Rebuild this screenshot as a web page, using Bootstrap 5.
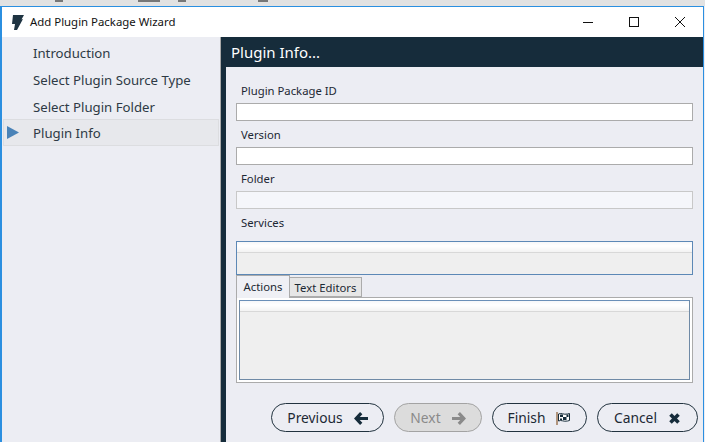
<!DOCTYPE html>
<html lang="en">
<head>
    <meta charset="UTF-8">
    <title>Add Plugin Package Wizard</title>
    <link href="https://cdn.jsdelivr.net/npm/bootstrap@5.3.0/dist/css/bootstrap.min.css" rel="stylesheet">
    <style>
        html, body { height: 442px; overflow: hidden; background: #ecedf3; }
        body { font-family: "Noto Sans", "Open Sans", sans-serif; font-size: 12px; color: #1c2833; }
        .desk-strip { height: 6px; background: #e2e2e2; gap: 0; }
        .desk-strip span { display: block; height: 2px; background: #777; }
        .wiz-window { height: 436px; border-top: 1px solid #2b8fe0; border-left: 2px solid #2b8fe0; border-right: 1px solid #2b8fe0; margin-right: 1px; }
        .wiz-title { height: 30px; background: #fff; color: #111; font-size: 11.4px; padding-left: 9px; }
        .wiz-title .app-name { margin-left: 5px; }
        .win-btn { width: 46px; height: 30px; }
        .wiz-side { width: 219px; border-right: 1px solid #a8a8a8; background: #ecedf3; padding: 2px 1px; }
        .side-step { height: 26.67px; padding-top: 4px; font-size: 13.2px; color: #2e3a45; padding-left: 29px; position: relative; border: 1px solid transparent; }
        .side-step.is-current { background: #e7e8ec; border-color: #dcdde0; }
        .side-step svg { position: absolute; left: 3px; top: 6px; }
        .wiz-main { border-left: 5px solid #162c3b; }
        .wiz-head { height: 30px; margin-left: -5px; background: #162c3b; color: #fff; font-size: 15px; padding-left: 10px; }
        .wiz-body { padding: 0 10px 0 10px; }
        .fld-label { height: 20px; margin-top: 6px; margin-left: 5px; font-size: 11.3px; color: #1c2833; line-height: 16px; }
        .fld-label.first { margin-top: 16px; }
        .fld-input { height: 18px; min-height: 18px; padding: 0 4px; border: 1px solid #ababab; border-radius: 0; font-size: 12px; background: #fff; }
        .fld-input:disabled { background: #f5f6fa; border-color: #c8c8c8; }
        .svc-box { height: 34px; margin-top: 6px; border: 1px solid #5c88b6; background: #efefef; }
        .grid-head { height: 11px; background: linear-gradient(#f6f7f9, #fff 40%, #f3f3f3); border-bottom: 1px solid #d8d8d8; }
        .tab-row { height: 22px; gap: 0; }
        .tab-row .nav-link { padding: 0; border-radius: 0; color: #1c2833; font-size: 11.3px; text-align: center; }
        .tab-row .nav-link.active { width: 54px; height: 23px; line-height: 22px; background: #eff0f5; border: 1px solid #ababab; border-bottom: 0; margin: 0; position: relative; z-index: 1; }
        .tab-row .nav-link.off { width: 72px; height: 20px; margin-top: 2px; line-height: 19px; background: #e6e6e6; border: 1px solid #ababab; border-left: 0; }
        .tab-pane-box { height: 86px; border: 1px solid #ababab; background: #fff; padding: 2px; }
        .tab-grid { height: 100%; border: 1px solid #6f8aa6; border-top-color: #6a8fb8; background: #efefef; }
        .wiz-foot { height: 29px; margin-top: 20px; margin-right: -5px; gap: 10px; }
        .pill-btn { height: 29px; border: 1px solid #22333f; border-radius: 15px; background: #ecedf3; color: #1c2833; font-size: 13.8px; padding: 1px 0 0; gap: 11px; }
        .pill-btn:disabled { background: #dcdcdc; border-color: #a3a3a3; color: #8a8a8a; opacity: 1; }
        .btn-prev { width: 113px; }
        .btn-next { width: 88px; }
        .btn-finish { width: 95px; }
        .btn-cancel { width: 101px; }
    </style>
</head>
<body>
    <div class="desk-strip d-flex align-items-start">
        <span style="width: 8px; margin-left: 55px"></span>
        <span style="width: 22px; margin-left: 75px"></span>
        <span style="width: 8px; margin-left: 18px"></span>
        <span style="width: 10px; margin-left: 72px"></span>
    </div>
    <div class="wiz-window d-flex flex-column">
        <div class="wiz-title d-flex align-items-center">
            <svg width="14" height="17" viewBox="0 0 14 17"><path d="M2 1h11l-2.500 4.500L12 5l-6 11H3l1-6H1z" fill="#1f3442"/></svg>
            <span class="app-name flex-grow-1">Add Plugin Package Wizard</span>
            <div class="win-btn d-flex align-items-center justify-content-center">
                <svg width="10" height="10"><path d="M0 5.500h10" stroke="#111"/></svg>
            </div>
            <div class="win-btn d-flex align-items-center justify-content-center">
                <svg width="10" height="10"><rect x=".5" y=".5" width="9" height="9" fill="none" stroke="#111"/></svg>
            </div>
            <div class="win-btn d-flex align-items-center justify-content-center">
                <svg width="10" height="10"><path d="M0 0l10 10M10 0L0 10" stroke="#111"/></svg>
            </div>
        </div>
        <div class="d-flex flex-grow-1">
            <div class="wiz-side">
                <div class="side-step d-flex align-items-center">Introduction</div>
                <div class="side-step d-flex align-items-center">Select Plugin Source Type</div>
                <div class="side-step d-flex align-items-center">Select Plugin Folder</div>
                <div class="side-step is-current d-flex align-items-center">
                    <svg width="13" height="13"><path d="M0 0l12 6.500L0 13z" fill="#4a83b8"/></svg>
                    Plugin Info
                </div>
            </div>
            <div class="wiz-main flex-grow-1 d-flex flex-column">
                <div class="wiz-head d-flex align-items-center">Plugin Info...</div>
                <div class="wiz-body">
                    <div class="fld-label first">Plugin Package ID</div>
                    <input class="form-control fld-input" type="text">
                    <div class="fld-label">Version</div>
                    <input class="form-control fld-input" type="text">
                    <div class="fld-label">Folder</div>
                    <input class="form-control fld-input" type="text" disabled>
                    <div class="fld-label">Services</div>
                    <div class="svc-box"><div class="grid-head"></div></div>
                    <ul class="nav tab-row">
                        <li class="nav-item"><a class="nav-link active" href="#">Actions</a></li>
                        <li class="nav-item"><a class="nav-link off" href="#">Text Editors</a></li>
                    </ul>
                    <div class="tab-pane-box">
                        <div class="tab-grid"><div class="grid-head"></div></div>
                    </div>
                    <div class="wiz-foot d-flex justify-content-end">
                        <button class="btn pill-btn btn-prev d-flex align-items-center justify-content-center" type="button">Previous
                            <svg width="14" height="13" viewBox="0 0 14 13"><path d="M7.200 1.200L2.200 6.500l5 5.300M3 6.500H14" fill="none" stroke="#162c3b" stroke-width="3.200"/></svg>
                        </button>
                        <button class="btn pill-btn btn-next d-flex align-items-center justify-content-center" type="button" disabled>Next
                            <svg width="14" height="13" viewBox="0 0 14 13"><path d="M6.800 1.200l5 5.300-5 5.300M11 6.500H0" fill="none" stroke="#8a8a8a" stroke-width="3.200"/></svg>
                        </button>
                        <button class="btn pill-btn btn-finish d-flex align-items-center justify-content-center" type="button">Finish
                            <svg width="15" height="13" viewBox="0 0 15 13"><path d="M1 0v13" stroke="#8a5a30" stroke-width="1.200"/><path d="M2.500 2c3-1.500 5 1 9 0l2-.5v7l-2 .5c-4 1-6-1.500-9 0z" fill="#fff" stroke="#162c3b"/><path d="M4 2.500h3V5H4zM7 5h3.500v3H7zM10.500 2.500h2V5h-2zM4 6.500h2V8H4z" fill="#162c3b"/></svg>
                        </button>
                        <button class="btn pill-btn btn-cancel d-flex align-items-center justify-content-center" type="button">Cancel
                            <svg width="13" height="13" viewBox="0 0 13 13"><path d="M2.500 2.500l8 8M10.500 2.500l-8 8" stroke="#162c3b" stroke-width="3.600"/></svg>
                        </button>
                    </div>
                </div>
            </div>
        </div>
    </div>
    <script src="https://cdn.jsdelivr.net/npm/bootstrap@5.3.0/dist/js/bootstrap.bundle.min.js"></script>
</body>
</html>
